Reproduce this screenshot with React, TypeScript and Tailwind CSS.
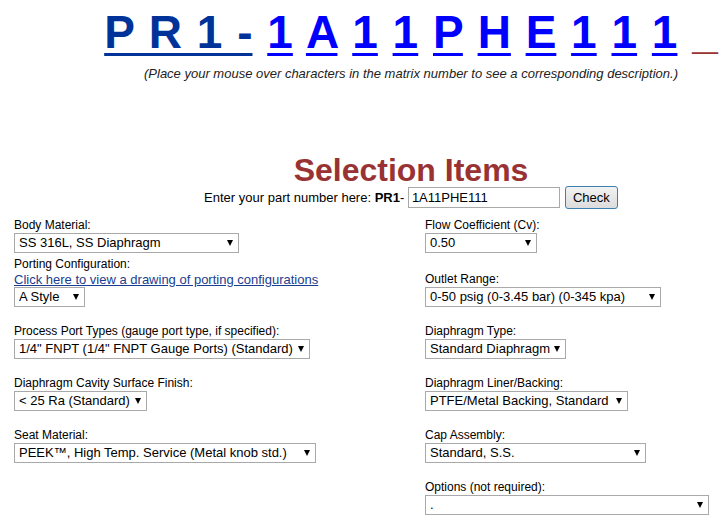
import React from "react";

const F = { fontFamily: '"Liberation Sans", Arial, sans-serif' };

function Sel({ w, value }: { w: string; value: string }) {
  return (
    <div className={`relative h-[20px] border border-[#a9a9a9] bg-white ${w}`}>
      <select
        className="block h-full w-full appearance-none bg-transparent pl-[4px] text-[13px] leading-[18px] text-black outline-none"
        style={F}
        defaultValue={value}
      >
        <option>{value}</option>
      </select>
      <span className="pointer-events-none absolute right-[5px] top-[6px] h-0 w-0 border-l-[3.5px] border-r-[3.5px] border-t-[6px] border-l-transparent border-r-transparent border-t-black" />
    </div>
  );
}

function Label({ children }: { children: React.ReactNode }) {
  return <div className="h-[15px] text-[12px] leading-[15px] text-black">{children}</div>;
}

const chars = ["1", "A", "1", "1", "P", "H", "E", "1", "1", "1"];

export default function App() {
  return (
    <div className="h-[523px] w-[721px] overflow-hidden bg-white" style={F}>
      <div className="w-[822px]">
        <div className="pt-[6px] text-center text-[46px] font-bold leading-[52px] whitespace-nowrap [word-spacing:2px]">
          <a className="text-[#003399] underline decoration-[3px] underline-offset-[5px]">P R 1 -</a>{" "}
          {chars.map((c, i) => (
            <React.Fragment key={i}>
              <a className="text-[#0000ff] underline decoration-[3px] underline-offset-[5px]">{c}</a>{" "}
            </React.Fragment>
          ))}
          <span className="text-[#993333]">_</span>
        </div>
        <div className="mt-[8px] text-center text-[13px] italic leading-[15px] text-[#222]">
          (Place your mouse over characters in the matrix number to see a corresponding description.)
        </div>
        <div className="mt-[74px] text-center text-[32px] font-bold leading-[31px] text-[#993333]">
          Selection Items
        </div>
        <div className="flex h-[23px] items-center justify-center text-[13px] text-black">
          <span>Enter your part number here:&nbsp;</span>
          <b>PR1</b>
          <span>-&nbsp;</span>
          <input
            className="h-[21px] w-[152px] border border-[#a9a9a9] px-[3px] text-[13px] text-black outline-none"
            style={F}
            defaultValue="1A11PHE111"
          />
          <button
            className="ml-[5px] h-[23px] w-[53px] rounded-[3px] border border-[#3c7fb1] bg-gradient-to-b from-[#f2f2f2] to-[#dcdcdc] text-[13px] text-black"
            style={F}
          >
            Check
          </button>
        </div>
        <div className="mt-[9px] grid grid-cols-2">
          <div className="flex flex-col pl-[14px]">
            <Label>Body Material:</Label>
            <Sel w="w-[225px]" value="SS 316L, SS Diaphragm" />
            <div className="mt-[4px]">
              <Label>Porting Configuration:</Label>
            </div>
            <a className="h-[15px] text-[13px] leading-[15px] text-[#1a3d8f] underline">
              Click here to view a drawing of porting configurations
            </a>
            <Sel w="w-[71px]" value="A Style" />
            <div className="mt-[17px]">
              <Label>Process Port Types (gauge port type, if specified):</Label>
            </div>
            <Sel w="w-[296px]" value={'1/4" FNPT (1/4" FNPT Gauge Ports) (Standard)'} />
            <div className="mt-[17px]">
              <Label>Diaphragm Cavity Surface Finish:</Label>
            </div>
            <Sel w="w-[133px]" value="< 25 Ra (Standard)" />
            <div className="mt-[17px]">
              <Label>Seat Material:</Label>
            </div>
            <Sel w="w-[302px]" value="PEEK™, High Temp. Service (Metal knob std.)" />
          </div>
          <div className="flex flex-col pl-[14px]">
            <Label>Flow Coefficient (Cv):</Label>
            <Sel w="w-[112px]" value="0.50" />
            <div className="mt-[19px]">
              <Label>Outlet Range:</Label>
            </div>
            <Sel w="w-[236px]" value="0-50 psig (0-3.45 bar) (0-345 kpa)" />
            <div className="mt-[17px]">
              <Label>Diaphragm Type:</Label>
            </div>
            <Sel w="w-[141px]" value="Standard Diaphragm" />
            <div className="mt-[17px]">
              <Label>Diaphragm Liner/Backing:</Label>
            </div>
            <Sel w="w-[203px]" value="PTFE/Metal Backing, Standard" />
            <div className="mt-[17px]">
              <Label>Cap Assembly:</Label>
            </div>
            <Sel w="w-[221px]" value="Standard, S.S." />
            <div className="mt-[17px]">
              <Label>Options (not required):</Label>
            </div>
            <Sel w="w-[284px]" value="." />
          </div>
        </div>
      </div>
    </div>
  );
}
